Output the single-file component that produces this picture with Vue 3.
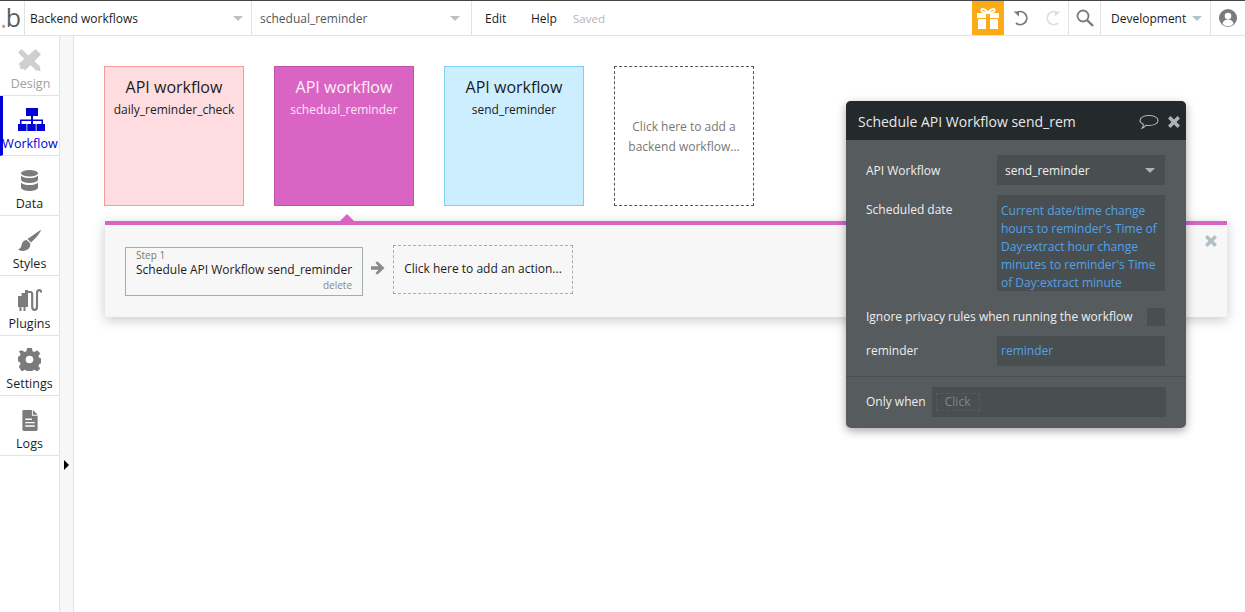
<script setup>
const cards = [
  { id: 'a', name: 'daily_reminder_check', cls: 'pink' },
  { id: 'b', name: 'schedual_reminder', cls: 'magenta' },
  { id: 'c', name: 'send_reminder', cls: 'blue' },
]
</script>

<template>
  <div class="app">
    <header class="top">
      <div class="logo"><span class="dot">.</span><span class="b">b</span></div>
      <div class="sel sel1"><span>Backend workflows</span><i class="caret"></i></div>
      <div class="sel sel2"><span>schedual_reminder</span><i class="caret"></i></div>
      <div class="menu"><span class="edit">Edit</span><span class="help">Help</span><span class="saved">Saved</span></div>
      <div class="gift">
        <svg width="22" height="21" viewBox="0 0 22 21"><path fill="#fff" d="M0 5h22v5H0zM1 11h20v10H1z"/><path fill="#fcab18" d="M9 5h4v16H9z"/><path fill="none" stroke="#fff" stroke-width="1.800" d="M11 5C9 1.500 5.500 0 4.500 1.500S6 5 11 5c5 0 7.500-2 6.500-3.500S13 1.500 11 5z"/></svg>
      </div>
      <div class="hist">
        <svg width="16" height="16" viewBox="0 0 16 16"><path fill="none" stroke="#7b7b7b" stroke-width="1.800" d="M4.500 2.200A6.500 6.500 0 1 1 3 13"/><path fill="#7b7b7b" d="M.5 1.500h5.500v5z"/></svg>
        <svg width="16" height="16" viewBox="0 0 16 16"><path fill="none" stroke="#dedede" stroke-width="1.800" d="M11.500 2.200A6.500 6.500 0 1 0 13 13"/><path fill="#dedede" d="M15.500 1.500H10v5z"/></svg>
      </div>
      <div class="search">
        <svg width="18" height="18" viewBox="0 0 18 18"><circle cx="7" cy="7" r="5.500" fill="none" stroke="#7b7b7b" stroke-width="1.800"/><path stroke="#7b7b7b" stroke-width="2.400" d="M11 11l6 6"/></svg>
      </div>
      <div class="dev"><span>Development</span><i class="caret lb"></i></div>
      <div class="user">
        <svg width="18" height="18" viewBox="0 0 18 18"><circle cx="9" cy="9" r="9" fill="#7b7b7b"/><circle cx="9" cy="7" r="3.300" fill="#fff"/><path fill="#fff" d="M3.500 15c.5-3.500 3-4.500 5.500-4.500s5 1 5.500 4.500a8 8 0 0 1-11 0z"/></svg>
      </div>
    </header>

    <div class="body">
      <nav class="side">
        <div class="item design">
          <svg width="23" height="22" viewBox="0 0 23 22"><g fill="#cfcfcf"><path d="M3.500 0 0 3.500 18 21.500l4.500.5-.5-4.500z"/><path d="M17.500 0 23 5.500 7 21.500l-2-2-1.500 1-2-2 1-1.500-2-2z"/></g></svg>
          <span>Design</span>
        </div>
        <div class="item active">
          <svg width="27" height="23" viewBox="0 0 27 23"><g fill="#0000d6"><path d="M8 0h12v8H8zM0 16h8.500v7H0zM9.250 16h8.500v7h-8.500zM18.500 16H27v7h-8.500z"/><path d="M13 8h2v3.500h10V16h-1.500v-3H15v3h-2v-3H3.500v3H2v-4.500h11z"/></g></svg>
          <span>Workflow</span>
        </div>
        <div class="item">
          <svg width="17" height="21" viewBox="0 0 17 21"><g fill="#7b7b7b"><ellipse cx="8.500" cy="3.200" rx="8.500" ry="3.200"/><path d="M0 5.500C1.500 7.500 5 8 8.500 8s7-.5 8.500-2.500V10c-1 2-4.500 3-8.500 3S1 12 0 10z"/><path d="M0 12.500C1.500 14.500 5 15 8.500 15s7-.5 8.500-2.500V18c-1 2-4.500 3-8.500 3S1 20 0 18z"/></g></svg>
          <span>Data</span>
        </div>
        <div class="item">
          <svg width="23" height="21" viewBox="0 0 23 21"><g fill="#7b7b7b"><path d="M22.500 0 9.500 9l3.500 3.500C17 9 20.500 5 23 .5z"/><path d="M8.500 10C5 10.500 4 13 3.500 15.500 3 18 1.500 19 0 19.500c2 1.500 5 1.800 8 .8 3-1 5-3.800 4-7.300z"/></g></svg>
          <span>Styles</span>
        </div>
        <div class="item">
          <svg width="24" height="22" viewBox="0 0 24 22"><path fill="#7b7b7b" d="M0 7h3.500V4H7V1h3v17H7.500v4H5.500v-4H3.500v4H1.500v-4H0z"/><path fill="none" stroke="#7b7b7b" stroke-width="2.200" d="M10 3h2.500c1.200 0 1.700 1 1.700 2.500v12c0 2 .9 3.400 2.400 3.400s2.400-1.400 2.400-3.400V4.500c0-2 .8-3.400 2.200-3.400s2 1 2 2.500"/></svg>
          <span>Plugins</span>
        </div>
        <div class="item">
          <svg width="23" height="23" viewBox="0 0 24 24"><path fill="#7b7b7b" fill-rule="evenodd" d="M9.500 0h5l.7 3.400 2 .8L20 2.300 23.200 5.500l-1.900 2.800.8 2 2.900.7v5l-2.900.7-.8 2 1.900 2.800-3.200 3.200-2.800-1.900-2 .8-.7 3.400h-5l-.7-3.400-2-.8-2.800 1.900L.8 19.500l1.900-2.800-.8-2L0 14V9l1.900-.7.8-2L.8 3.500 4 2.300l2.800 1.900 2-.8zM12 8a4 4 0 1 0 0 8 4 4 0 0 0 0-8z"/></svg>
          <span>Settings</span>
        </div>
        <div class="item logs">
          <svg width="16" height="21" viewBox="0 0 16 22"><path fill="#7b7b7b" fill-rule="evenodd" d="M1.500 0H10v6h6v14.500a1.500 1.500 0 0 1-1.500 1.500h-13A1.500 1.500 0 0 1 0 20.500v-19A1.500 1.500 0 0 1 1.500 0zM11 0l5 5h-5zM3 9v1.500h7V9zM3 12.500V14h10v-1.500zM3 16v1.500h10V16z"/></svg>
          <span>Logs</span>
        </div>
      </nav>
      <div class="gutter"><i class="arrow"></i></div>

      <main class="canvas">
        <div class="cards">
          <div v-for="c in cards" :key="c.id" class="card" :class="c.cls">
            <div class="ct">API workflow</div>
            <div class="cn">{{ c.name }}</div>
          </div>
          <div class="card add">Click here to add a backend workflow...</div>
        </div>

        <section class="panel">
          <i class="notch"></i>
          <div class="step">
            <div class="s1">Step 1</div>
            <div class="s2">Schedule API Workflow send_reminder</div>
            <div class="s3">delete</div>
          </div>
          <svg class="next" width="14" height="14" viewBox="0 0 14 14"><path fill="#8a8a8a" d="M0 5.200h7.500L4.500 2 6.300 .2 13.500 7l-7.200 6.800L4.500 12l3-3.200H0z"/></svg>
          <div class="addact">Click here to add an action...</div>
          <svg class="pclose" width="14" height="14" viewBox="0 0 14 14"><path fill="#b4bfc4" d="M3.500 1 7 4.500 10.500 1 13 3.500 9.500 7 13 10.500 10.500 13 7 9.500 3.500 13 1 10.500 4.500 7 1 3.500z"/></svg>
        </section>

        <aside class="pop">
          <div class="pop-h">
            <span>Schedule API Workflow send_rem</span>
            <svg class="bubble" width="20" height="16" viewBox="0 0 20 16"><path fill="none" stroke="#aab5ba" stroke-width="1.100" d="M10 1.500c5 0 9 2 9 5s-4 5-9 5c-1 0-2 0-3-.3-1 1.200-2.500 2.800-4 3 1-1 1.500-2.500 1.300-4C2 9 1 7.800 1 6.500c0-3 4-5 9-5z"/></svg>
            <svg class="x" width="14" height="14" viewBox="0 0 14 14"><path fill="#a9b4b9" d="M3.500 1 7 4.500 10.500 1 13 3.500 9.500 7 13 10.500 10.500 13 7 9.500 3.500 13 1 10.500 4.500 7 1 3.500z"/></svg>
          </div>
          <div class="pop-b">
            <div class="row r1">
              <label>API Workflow</label>
              <div class="fld drop"><span>send_reminder</span><i class="caret gr"></i></div>
            </div>
            <div class="row r2">
              <label>Scheduled date</label>
              <div class="fld expr">Current date/time change hours to reminder's Time of Day:extract hour change minutes to reminder's Time of Day:extract minute</div>
            </div>
            <div class="row r3">
              <label>Ignore privacy rules when running the workflow</label>
              <div class="chk"></div>
            </div>
            <div class="row r4">
              <label>reminder</label>
              <div class="fld ref">reminder</div>
            </div>
          </div>
          <div class="pop-f">
            <label>Only when</label>
            <div class="when"><span>Click</span></div>
          </div>
        </aside>
      </main>
    </div>
  </div>
</template>

<style>
html, body { margin: 0; background: #fff; overflow: hidden; }
</style>

<style scoped>
.app { width: 1245px; height: 612px; font-family: "Open Sans", sans-serif; position: relative; overflow: hidden; color: #1c1c1c; }
.top { height: 34px; border-top: 1px solid #444; border-bottom: 1px solid #e3e3e3; display: flex; align-items: stretch; font-size: 12px; box-sizing: content-box; }
.logo { width: 24px; flex: none; border-right: 1px solid #e3e3e3; box-sizing: content-box; display: flex; align-items: center; justify-content: flex-end; font-size: 25px; color: #5d5d5d; line-height: 1; }
.logo .dot { color: #a0a0a0; margin-right: -1px; }
.logo .b { margin-right: 3px; margin-top: -2px; }
.sel { display: flex; align-items: center; justify-content: space-between; box-sizing: border-box; border-right: 1px solid #e3e3e3; flex: none; }
.sel1 { width: 227px; padding: 0 8px 0 5px; }
.sel2 { width: 220px; padding: 0 11px 0 8px; color: #555; }
.caret { width: 0; height: 0; border-left: 5px solid transparent; border-right: 5px solid transparent; border-top: 5px solid #b9c1c6; display: block; }
.caret.lb { border-top-color: #b3c3cf; }
.caret.gr { border-top-color: #aeb2b5; }
.menu { flex: 1; display: flex; align-items: center; padding-left: 13px; }
.edit { width: 46px; }
.help { width: 42px; }
.saved { color: #b5b5b5; font-size: 11.500px; }
.gift { width: 32px; flex: none; background: #fcab18; display: flex; align-items: center; justify-content: center; }
.hist { width: 65px; flex: none; display: flex; align-items: center; gap: 16px; padding-left: 9px; box-sizing: border-box; border-right: 1px solid #e3e3e3; }
.search { width: 32px; flex: none; display: flex; align-items: center; justify-content: center; border-right: 1px solid #e3e3e3; box-sizing: border-box; }
.dev { width: 110px; flex: none; padding: 0 8px 0 10px; box-sizing: border-box; display: flex; align-items: center; justify-content: space-between; border-right: 1px solid #e3e3e3; }
.user { width: 34px; flex: none; display: flex; align-items: center; justify-content: center; }

.body { display: flex; height: 576px; }
.side { width: 60px; box-sizing: border-box; border-right: 1px solid #e3e3e3; flex: none; }
.item { height: 60px; box-sizing: border-box; border-bottom: 1px solid #e3e3e3; display: flex; flex-direction: column; align-items: center; justify-content: flex-end; padding-bottom: 3px; gap: 4px; font-size: 12.500px; line-height: 17px; position: relative; }
.item svg { flex: none; }
.design { color: #a0a0a0; }
.design span { margin-left: 2px; }
.active { color: #0000d6; border-left: 3px solid #0000d6; }
.active span { margin-left: -2px; }
.gutter { width: 13px; flex: none; background: #f7f7f7; border-right: 1px solid #e3e3e3; box-sizing: content-box; position: relative; }
.arrow { position: absolute; left: 4px; top: 424px; width: 0; height: 0; border-left: 5px solid #000; border-top: 5px solid transparent; border-bottom: 5px solid transparent; }

.canvas { flex: 1; position: relative; padding: 30px 18px 0 30px; box-sizing: border-box; min-width: 0; }
.cards { display: flex; gap: 30px; }
.card { width: 140px; height: 140px; box-sizing: border-box; text-align: center; padding-top: 8px; }
.ct { font-size: 16px; line-height: 24px; }
.cn { font-size: 12px; line-height: 22px; }
.pink { background: #ffdcdf; border: 1px solid #f59c9c; }
.magenta { background: #d964c4; border: 1px solid #c350ae; color: #fff; }
.magenta .cn { color: #fbe6f7; }
.magenta .ct { color: #fdf0fb; }
.blue { background: #cdeeff; border: 1px solid #80cdf5; }
.add { border: 1px dashed #555; color: #777; font-size: 12px; line-height: 20px; display: flex; align-items: center; justify-content: center; padding: 2px 10px 0; }

.panel { position: relative; margin: 15px 0 0 1px; height: 96px; box-sizing: border-box; background: #f7f7f7; border-top: 4px solid #d964c4; box-shadow: 0 3px 12px rgba(0,0,0,.22); display: flex; align-items: flex-start; padding: 20px 0 0 20px; }
.notch { position: absolute; left: 235px; top: -11px; width: 0; height: 0; border-left: 7px solid transparent; border-right: 7px solid transparent; border-bottom: 7px solid #d964c4; }
.step { width: 238px; height: 49px; margin-top: 2px; box-sizing: border-box; border: 1px solid #a0adb3; padding: 2px 10px 0; flex: none; white-space: nowrap; }
.s1 { font-size: 10px; line-height: 11px; color: #777; }
.s2 { font-size: 12px; line-height: 17px; }
.s3 { font-size: 10px; line-height: 13px; margin-top: 1px; color: #888; text-align: right; }
.next { margin: 16px 0 0 8px; flex: none; }
.addact { width: 180px; height: 49px; margin-left: 8px; padding-bottom: 2px; box-sizing: border-box; border: 1px dashed #a0adb3; font-size: 12px; display: flex; align-items: center; justify-content: center; flex: none; }
.pclose { position: absolute; top: 9px; right: 9px; }

.pop { position: absolute; left: 772px; top: 65px; width: 340px; height: 327px; background: #565b5e; border-radius: 5px; box-shadow: 0 3px 10px rgba(0,0,0,.35); color: #eee; font-size: 12px; display: flex; flex-direction: column; }
.pop-h { height: 39px; flex: none; box-sizing: border-box; background: #24292b; border-radius: 5px 5px 0 0; display: flex; align-items: center; padding: 2px 0 0 12px; font-size: 14px; color: #e8e8e8; position: relative; }
.bubble { position: absolute; left: 293px; top: 13px; }
.x { position: absolute; left: 321px; top: 14px; }
.pop-b { flex: 1; padding: 15px 21px 0 20px; }
.row { display: flex; justify-content: space-between; }
.r1 { height: 40px; }
.r1 label { line-height: 32px; }
.r2 label { line-height: 29px; }
.fld { width: 168px; background: #494e50; box-sizing: border-box; flex: none; }
.drop { height: 30px; display: flex; align-items: center; justify-content: space-between; padding: 0 10px 0 8px; }
.expr { height: 96px; padding: 7px 4px 0; color: #52a2e8; line-height: 18px; }
.r3 { align-items: center; margin-top: 17px; height: 18px; }
.r3 label { margin-top: -2px; }
.chk { width: 18px; height: 18px; background: #494e50; }
.r4 { margin-top: 10px; align-items: stretch; }
.r4 label { line-height: 30px; }
.ref { height: 30px; line-height: 30px; padding-left: 4px; color: #52a2e8; }
.pop-f { height: 52px; flex: none; border-top: 1px solid #4a4f51; box-sizing: border-box; display: flex; align-items: flex-start; padding: 10px 20px 0 20px; }
.pop-f label { line-height: 30px; }
.when { width: 234px; height: 30px; margin-left: 6px; background: #494e50; flex: none; margin-right: -20px; padding: 6px 4px; box-sizing: border-box; position: relative; }
.when span { display: block; width: 44px; height: 18px; box-sizing: border-box; border: 1px dashed #565b5e; line-height: 16px; text-align: center; color: #80868a; }
</style>
